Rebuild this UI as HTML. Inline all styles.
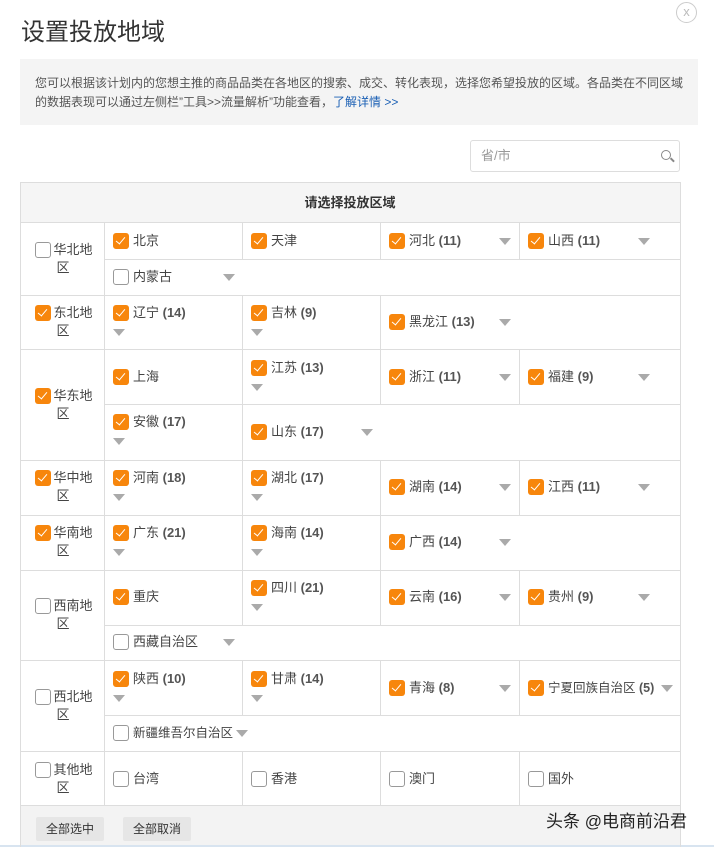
<!DOCTYPE html>
<html><head><meta charset="utf-8"><style>
*{margin:0;padding:0;box-sizing:border-box}
body{width:714px;height:847px;background:#fff;position:relative;overflow:hidden;font-family:"Liberation Sans","Noto Sans CJK SC",sans-serif;color:#333;font-size:13px}
div,span{position:absolute}
.h{height:1px;background:#ddd}
.v{width:1px;background:#ddd}
.c,.u{width:16px;height:16px;border-radius:3px}
.c{background:#f7860c}
.c:after{content:"";position:absolute;left:5px;top:2px;width:4px;height:8px;border:solid #fff;border-width:0 1.5px 1.5px 0;transform:rotate(40deg)}
.u{background:#fff;border:1px solid #999}
.t{line-height:18px;white-space:nowrap;color:#444}
.t b{font-weight:bold;color:#555}
.a{width:0;height:0;border-left:6px solid transparent;border-right:6px solid transparent;border-top:7px solid #aaa}
.r{line-height:18px;width:40px;text-align:center;color:#444}
</style></head><body>
<div style="left:21px;top:17px;font-size:24px;color:#333;line-height:32px">设置投放地域</div>
<div style="left:676px;top:2px;width:21px;height:21px;border:1px solid #ccc;border-radius:50%;color:#bbb;font-size:13px;text-align:center;line-height:18px">x</div>
<div style="left:20px;top:59px;width:678px;height:66px;background:#f4f4f4"></div>
<div style="left:35px;top:74px;width:655px;font-size:12px;line-height:19px;color:#555">您可以根据该计划内的您想主推的商品品类在各地区的搜索、成交、转化表现，选择您希望投放的区域。各品类在不同区域的数据表现可以通过左侧栏”工具>>流量解析”功能查看，<span style="position:static;color:#1a5fb4">了解详情 &gt;&gt;</span></div>
<div style="left:470px;top:140px;width:210px;height:32px;border:1px solid #ddd;border-radius:3px"></div>
<div style="left:481px;top:147px;color:#999;line-height:18px">省/市</div>
<div style="left:661px;top:150px;width:10px;height:10px;border:1.5px solid #888;border-radius:50%"></div>
<div style="left:670px;top:159px;width:5px;height:1.5px;background:#888;transform:rotate(45deg)"></div>

<div style="left:20px;top:182px;width:660px;height:40px;background:#f5f5f5"></div>
<div style="left:20px;top:194px;width:660px;text-align:center;font-weight:bold;line-height:18px">请选择投放区域</div>
<div style="left:20px;top:805px;width:660px;height:42px;background:#f3f3f3"></div>
<div style="left:0;top:845px;width:714px;height:2px;background:#d8e4f0"></div>

<div class="h" style="left:20px;top:182px;width:660px"></div>
<div class="h" style="left:20px;top:222px;width:660px"></div>
<div class="h" style="left:104px;top:259px;width:576px"></div>
<div class="h" style="left:20px;top:295px;width:660px"></div>
<div class="h" style="left:20px;top:349px;width:660px"></div>
<div class="h" style="left:104px;top:404px;width:576px"></div>
<div class="h" style="left:20px;top:460px;width:660px"></div>
<div class="h" style="left:20px;top:515px;width:660px"></div>
<div class="h" style="left:20px;top:570px;width:660px"></div>
<div class="h" style="left:104px;top:625px;width:576px"></div>
<div class="h" style="left:20px;top:660px;width:660px"></div>
<div class="h" style="left:104px;top:715px;width:576px"></div>
<div class="h" style="left:20px;top:751px;width:660px"></div>
<div class="h" style="left:20px;top:805px;width:660px"></div>
<div class="v" style="left:20px;top:182px;height:665px"></div>
<div class="v" style="left:680px;top:182px;height:665px"></div>
<div class="v" style="left:104px;top:222px;height:583px"></div>
<div class="v" style="left:242px;top:222px;height:37px"></div><div class="v" style="left:380px;top:222px;height:37px"></div><div class="v" style="left:519px;top:222px;height:37px"></div>
<div class="v" style="left:242px;top:295px;height:54px"></div><div class="v" style="left:380px;top:295px;height:54px"></div>
<div class="v" style="left:242px;top:349px;height:111px"></div><div class="v" style="left:380px;top:349px;height:55px"></div><div class="v" style="left:519px;top:349px;height:55px"></div>
<div class="v" style="left:242px;top:460px;height:110px"></div><div class="v" style="left:380px;top:460px;height:110px"></div><div class="v" style="left:519px;top:460px;height:55px"></div>
<div class="v" style="left:242px;top:570px;height:55px"></div><div class="v" style="left:380px;top:570px;height:55px"></div><div class="v" style="left:519px;top:570px;height:55px"></div>
<div class="v" style="left:242px;top:660px;height:55px"></div><div class="v" style="left:380px;top:660px;height:55px"></div><div class="v" style="left:519px;top:660px;height:55px"></div>
<div class="v" style="left:242px;top:751px;height:54px"></div><div class="v" style="left:380px;top:751px;height:54px"></div><div class="v" style="left:519px;top:751px;height:54px"></div>

<div class="u" style="left:35px;top:242px"></div><div class="r" style="left:53px;top:241px">华北地</div><div class="r" style="left:43px;top:259px">区</div>
<div class="c" style="left:35px;top:305px"></div><div class="r" style="left:53px;top:304px">东北地</div><div class="r" style="left:43px;top:322px">区</div>
<div class="c" style="left:35px;top:388px"></div><div class="r" style="left:53px;top:387px">华东地</div><div class="r" style="left:43px;top:405px">区</div>
<div class="c" style="left:35px;top:470px"></div><div class="r" style="left:53px;top:469px">华中地</div><div class="r" style="left:43px;top:487px">区</div>
<div class="c" style="left:35px;top:525px"></div><div class="r" style="left:53px;top:524px">华南地</div><div class="r" style="left:43px;top:542px">区</div>
<div class="u" style="left:35px;top:598px"></div><div class="r" style="left:53px;top:597px">西南地</div><div class="r" style="left:43px;top:615px">区</div>
<div class="u" style="left:35px;top:689px"></div><div class="r" style="left:53px;top:688px">西北地</div><div class="r" style="left:43px;top:706px">区</div>
<div class="u" style="left:35px;top:762px"></div><div class="r" style="left:53px;top:761px">其他地</div><div class="r" style="left:43px;top:779px">区</div>

<div class="c" style="left:113px;top:233px"></div><div class="t" style="left:133px;top:232px">北京</div>
<div class="c" style="left:251px;top:233px"></div><div class="t" style="left:271px;top:232px">天津</div>
<div class="c" style="left:389px;top:233px"></div><div class="t" style="left:409px;top:232px">河北 <b>(11)</b></div><div class="a" style="left:499px;top:238px"></div>
<div class="c" style="left:528px;top:233px"></div><div class="t" style="left:548px;top:232px">山西 <b>(11)</b></div><div class="a" style="left:638px;top:238px"></div>
<div class="u" style="left:113px;top:269px"></div><div class="t" style="left:133px;top:268px">内蒙古</div><div class="a" style="left:223px;top:274px"></div>
<div class="c" style="left:113px;top:305px"></div><div class="t" style="left:133px;top:304px">辽宁 <b>(14)</b></div><div class="a" style="left:113px;top:329px"></div>
<div class="c" style="left:251px;top:305px"></div><div class="t" style="left:271px;top:304px">吉林 <b>(9)</b></div><div class="a" style="left:251px;top:329px"></div>
<div class="c" style="left:389px;top:314px"></div><div class="t" style="left:409px;top:313px">黑龙江 <b>(13)</b></div><div class="a" style="left:499px;top:319px"></div>
<div class="c" style="left:113px;top:369px"></div><div class="t" style="left:133px;top:368px">上海</div>
<div class="c" style="left:251px;top:360px"></div><div class="t" style="left:271px;top:359px">江苏 <b>(13)</b></div><div class="a" style="left:251px;top:384px"></div>
<div class="c" style="left:389px;top:369px"></div><div class="t" style="left:409px;top:368px">浙江 <b>(11)</b></div><div class="a" style="left:499px;top:374px"></div>
<div class="c" style="left:528px;top:369px"></div><div class="t" style="left:548px;top:368px">福建 <b>(9)</b></div><div class="a" style="left:638px;top:374px"></div>
<div class="c" style="left:113px;top:414px"></div><div class="t" style="left:133px;top:413px">安徽 <b>(17)</b></div><div class="a" style="left:113px;top:438px"></div>
<div class="c" style="left:251px;top:424px"></div><div class="t" style="left:271px;top:423px">山东 <b>(17)</b></div><div class="a" style="left:361px;top:429px"></div>
<div class="c" style="left:113px;top:470px"></div><div class="t" style="left:133px;top:469px">河南 <b>(18)</b></div><div class="a" style="left:113px;top:494px"></div>
<div class="c" style="left:251px;top:470px"></div><div class="t" style="left:271px;top:469px">湖北 <b>(17)</b></div><div class="a" style="left:251px;top:494px"></div>
<div class="c" style="left:389px;top:479px"></div><div class="t" style="left:409px;top:478px">湖南 <b>(14)</b></div><div class="a" style="left:499px;top:484px"></div>
<div class="c" style="left:528px;top:479px"></div><div class="t" style="left:548px;top:478px">江西 <b>(11)</b></div><div class="a" style="left:638px;top:484px"></div>
<div class="c" style="left:113px;top:525px"></div><div class="t" style="left:133px;top:524px">广东 <b>(21)</b></div><div class="a" style="left:113px;top:549px"></div>
<div class="c" style="left:251px;top:525px"></div><div class="t" style="left:271px;top:524px">海南 <b>(14)</b></div><div class="a" style="left:251px;top:549px"></div>
<div class="c" style="left:389px;top:534px"></div><div class="t" style="left:409px;top:533px">广西 <b>(14)</b></div><div class="a" style="left:499px;top:539px"></div>
<div class="c" style="left:113px;top:589px"></div><div class="t" style="left:133px;top:588px">重庆</div>
<div class="c" style="left:251px;top:580px"></div><div class="t" style="left:271px;top:579px">四川 <b>(21)</b></div><div class="a" style="left:251px;top:604px"></div>
<div class="c" style="left:389px;top:589px"></div><div class="t" style="left:409px;top:588px">云南 <b>(16)</b></div><div class="a" style="left:499px;top:594px"></div>
<div class="c" style="left:528px;top:589px"></div><div class="t" style="left:548px;top:588px">贵州 <b>(9)</b></div><div class="a" style="left:638px;top:594px"></div>
<div class="u" style="left:113px;top:634px"></div><div class="t" style="left:133px;top:633px">西藏自治区</div><div class="a" style="left:223px;top:639px"></div>
<div class="c" style="left:113px;top:671px"></div><div class="t" style="left:133px;top:670px">陕西 <b>(10)</b></div><div class="a" style="left:113px;top:695px"></div>
<div class="c" style="left:251px;top:671px"></div><div class="t" style="left:271px;top:670px">甘肃 <b>(14)</b></div><div class="a" style="left:251px;top:695px"></div>
<div class="c" style="left:389px;top:680px"></div><div class="t" style="left:409px;top:679px">青海 <b>(8)</b></div><div class="a" style="left:499px;top:685px"></div>
<div class="c" style="left:528px;top:680px"></div><div class="t" style="left:548px;top:679px;font-size:12.5px">宁夏回族自治区 <b>(5)</b></div><div class="a" style="left:661px;top:685px"></div>
<div class="u" style="left:113px;top:725px"></div><div class="t" style="left:133px;top:724px;font-size:12.5px">新疆维吾尔自治区</div><div class="a" style="left:236px;top:730px"></div>
<div class="u" style="left:113px;top:771px"></div><div class="t" style="left:133px;top:770px">台湾</div>
<div class="u" style="left:251px;top:771px"></div><div class="t" style="left:271px;top:770px">香港</div>
<div class="u" style="left:389px;top:771px"></div><div class="t" style="left:409px;top:770px">澳门</div>
<div class="u" style="left:528px;top:771px"></div><div class="t" style="left:548px;top:770px">国外</div>

<div style="left:36px;top:817px;width:68px;height:24px;background:#e6e6e6;border-radius:2px;font-size:12px;line-height:24px;text-align:center">全部选中</div>
<div style="left:123px;top:817px;width:68px;height:24px;background:#e6e6e6;border-radius:2px;font-size:12px;line-height:24px;text-align:center">全部取消</div>
<div style="left:546px;top:810px;font-size:17px;line-height:24px;color:#222">头条 @电商前沿君</div>
</body></html>
